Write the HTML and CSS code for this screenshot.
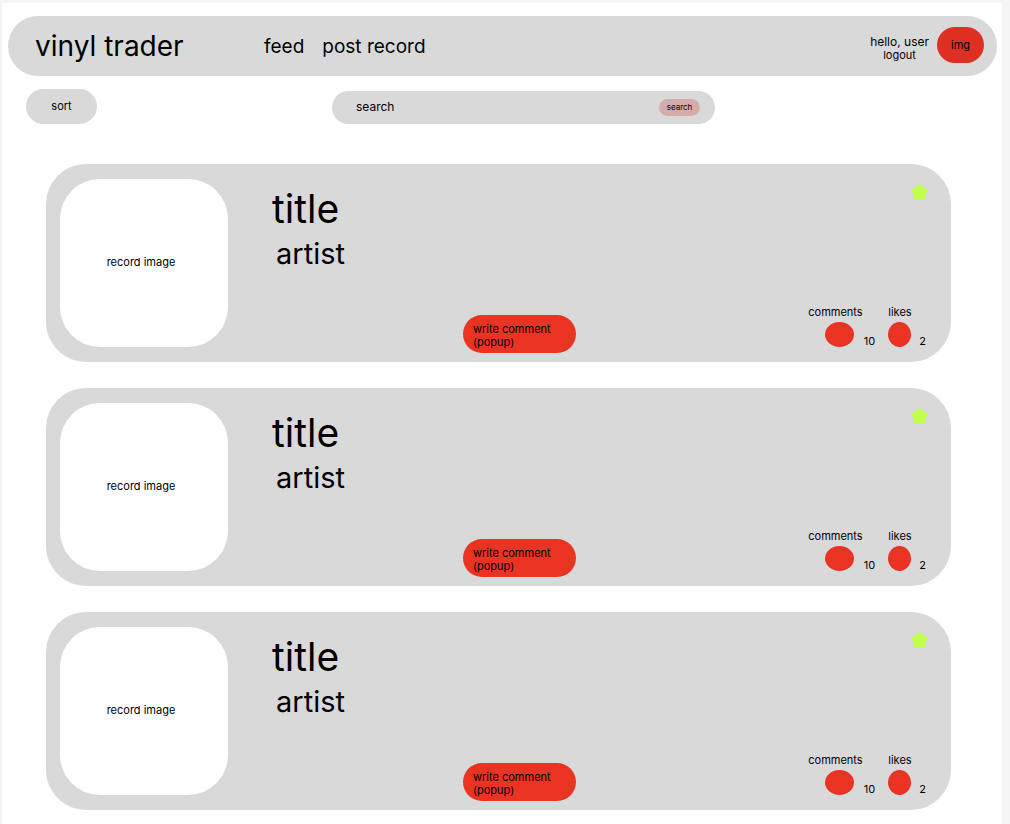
FILE: index.html
```html
<!DOCTYPE html>
<html lang="en">
<head>
<meta charset="utf-8">
<meta name="viewport" content="width=device-width, initial-scale=1">
<title>vinyl trader</title>
<link rel="stylesheet" href="styles.css">
</head>
<body>
<svg class="defs" aria-hidden="true">
  <symbol id="star" viewBox="0 0 17 16">
    <path d="M8.5 2 L10.8 5 L15 6.3 L12.7 9.5 L12.6 14 L8.5 12.8 L4.4 14 L4.3 9.5 L2 6.3 L6.2 5 Z" stroke-width="3.6" stroke-linejoin="round"/>
  </symbol>
</svg>
<div class="page">
  <header class="topbar">
    <h1 class="brand">vinyl trader</h1>
    <nav class="nav">
      <a href="#feed">feed</a>
      <a href="#post">post record</a>
    </nav>
    <div class="account">
      <span class="greeting">hello, user</span>
      <a class="logout" href="#logout">logout</a>
    </div>
    <a class="avatar" href="#profile">img</a>
  </header>

  <div class="tools">
    <button class="sort" type="button">sort</button>
    <form class="search" role="search">
      <input class="search-input" type="text" placeholder="search" aria-label="search">
      <button class="search-button" type="button">search</button>
    </form>
  </div>

  <main class="feed">
    <article class="card">
      <div class="cover">record image</div>
      <div class="info">
        <h2 class="title">title</h2>
        <p class="artist">artist</p>
      </div>
      <button class="write" type="button">write comment (popup)</button>
      <div class="side">
        <button class="favourite" type="button" aria-label="favourite"><svg class="star"><use href="#star"/></svg></button>
        <div class="stats">
          <div class="stat stat-comments">
            <span class="stat-label">comments</span>
            <div class="stat-row"><button class="dot" type="button" aria-label="comments"></button><span>10</span></div>
          </div>
          <div class="stat stat-likes">
            <span class="stat-label">likes</span>
            <div class="stat-row"><button class="dot" type="button" aria-label="likes"></button><span>2</span></div>
          </div>
        </div>
      </div>
    </article>

    <article class="card">
      <div class="cover">record image</div>
      <div class="info">
        <h2 class="title">title</h2>
        <p class="artist">artist</p>
      </div>
      <button class="write" type="button">write comment (popup)</button>
      <div class="side">
        <button class="favourite" type="button" aria-label="favourite"><svg class="star"><use href="#star"/></svg></button>
        <div class="stats">
          <div class="stat stat-comments">
            <span class="stat-label">comments</span>
            <div class="stat-row"><button class="dot" type="button" aria-label="comments"></button><span>10</span></div>
          </div>
          <div class="stat stat-likes">
            <span class="stat-label">likes</span>
            <div class="stat-row"><button class="dot" type="button" aria-label="likes"></button><span>2</span></div>
          </div>
        </div>
      </div>
    </article>

    <article class="card">
      <div class="cover">record image</div>
      <div class="info">
        <h2 class="title">title</h2>
        <p class="artist">artist</p>
      </div>
      <button class="write" type="button">write comment (popup)</button>
      <div class="side">
        <button class="favourite" type="button" aria-label="favourite"><svg class="star"><use href="#star"/></svg></button>
        <div class="stats">
          <div class="stat stat-comments">
            <span class="stat-label">comments</span>
            <div class="stat-row"><button class="dot" type="button" aria-label="comments"></button><span>10</span></div>
          </div>
          <div class="stat stat-likes">
            <span class="stat-label">likes</span>
            <div class="stat-row"><button class="dot" type="button" aria-label="likes"></button><span>2</span></div>
          </div>
        </div>
      </div>
    </article>
  </main>
</div>
</body>
</html>
```
FILE: styles.css
```css
* {
  box-sizing: border-box;
}

body {
  margin: 0;
  padding: 3px 8px 0 2px;
  background: #f5f5f5;
  color: #000;
  font-family: Inter, "Liberation Sans", sans-serif;
  font-size: 11px;
  line-height: 14px;
  font-optical-sizing: none;
}

h1,
h2,
p {
  margin: 0;
  font-weight: 400;
}

a {
  color: inherit;
  text-decoration: none;
}

button,
input {
  margin: 0;
  padding: 0;
  border: 0;
  background: none;
  color: inherit;
  font: inherit;
}

.defs {
  position: absolute;
  width: 0;
  height: 0;
}

.page {
  padding: 13px 5px 14px 6px;
  background: #fff;
}

.topbar {
  display: flex;
  align-items: center;
  height: 60px;
  padding: 0 13px 0 27px;
  border-radius: 30px;
  background: #d9d9d9;
}

.brand {
  width: 229px;
  font-size: 28px;
  line-height: 36px;
}

.nav {
  display: flex;
  gap: 18px;
  padding-top: 2px;
  font-size: 19px;
  line-height: 24px;
}

.account {
  display: flex;
  flex-direction: column;
  align-items: center;
  margin-left: auto;
  padding-top: 4px;
}

.greeting {
  font-size: 12px;
}

.logout {
  line-height: 12px;
}

.avatar {
  display: flex;
  align-items: center;
  justify-content: center;
  width: 47px;
  height: 36px;
  margin: 0 0 2px 8px;
  border-radius: 18px;
  background: #dd3023;
}

.tools {
  display: grid;
  grid-template-columns: 1fr 383px 1fr;
  align-items: end;
  padding: 13px 0 0 18px;
}

.sort {
  width: 71px;
  height: 35px;
  padding-bottom: 2px;
  border-radius: 18px;
  background: #d9d9d9;
}

.search {
  display: flex;
  align-items: center;
  height: 33px;
  margin: 0 -12px 0 12px;
  padding: 0 15px 0 24px;
  border-radius: 17px;
  background: #d9d9d9;
}

.search-input {
  flex: 1;
  min-width: 0;
  padding-bottom: 2px;
  font-size: 12px;
}

.search-input::placeholder {
  color: #000;
  opacity: 1;
}

.search-button {
  width: 41px;
  height: 17px;
  padding-bottom: 2px;
  border-radius: 9px;
  background: #d6abab;
  font-size: 8px;
}

.feed {
  display: flex;
  flex-direction: column;
  gap: 26px;
  padding: 40px 46px 0 38px;
}

.card {
  display: grid;
  grid-template-columns: 168px 147px 113px 1fr;
  column-gap: 44px;
  padding: 15px 23px 15px 14px;
  border-radius: 40px;
  background: #d9d9d9;
}

.cover {
  display: flex;
  align-items: center;
  justify-content: center;
  height: 168px;
  padding: 0 6px 3px 0;
  border-radius: 40px;
  background: #fff;
}

.info {
  padding-top: 7px;
}

.title {
  font-size: 39px;
  line-height: 46px;
}

.artist {
  padding: 4px 0 0 4px;
  font-size: 29px;
  line-height: 36px;
}

.write {
  align-self: end;
  height: 38px;
  margin-bottom: -6px;
  padding: 4px 20px 0 10px;
  border-radius: 19px;
  background: #e93323;
  line-height: 13px;
  text-align: left;
}

.side {
  display: flex;
  flex-direction: column;
  align-items: flex-end;
  justify-content: space-between;
  padding-top: 5px;
}

.favourite {
  width: 17px;
  height: 16px;
}

.star {
  display: block;
  width: 17px;
  height: 16px;
  fill: #c0ff4b;
  stroke: #c0ff4b;
}

.stats {
  display: flex;
  gap: 13px;
  padding-right: 2px;
}

.stat {
  display: flex;
  flex-direction: column;
  gap: 3px;
}

.stat-comments {
  width: 67px;
}

.stat-row {
  display: flex;
  align-items: flex-end;
  gap: 8px;
  line-height: 12px;
}

.stat-comments .stat-row {
  justify-content: flex-end;
  gap: 10px;
}

.dot {
  width: 23px;
  height: 25px;
  border-radius: 50%;
  background: #e93323;
}

.stat-comments .dot {
  width: 29px;
}
```
